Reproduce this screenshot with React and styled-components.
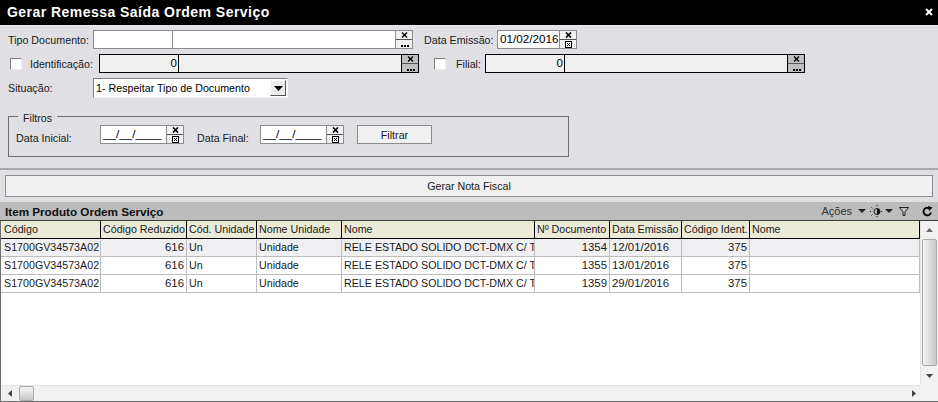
import React from "react"
import styled, { createGlobalStyle } from "styled-components"

const Global = createGlobalStyle`
  html, body { margin: 0; padding: 0; background: #dfdfe4; }
  body { font-family: "Liberation Sans", Arial, sans-serif; font-size: 10.7px; color: #000; }
  * { box-sizing: border-box; }
`

const Page = styled.div`
  width: 938px;
  height: 402px;
  display: flex;
  flex-direction: column;
  overflow: hidden;
`
const TitleBar = styled.div`
  height: 26px;
  flex: none;
  background: #000;
  border-bottom: 1px solid #e8e8e8;
  color: #fff;
  display: flex;
  align-items: center;
  justify-content: space-between;
  padding: 0 5px 1px 7px;
  font-weight: bold;
  font-size: 14px;
  letter-spacing: 0.46px;
`
const FormPanel = styled.div`
  height: 144px;
  flex: none;
  padding: 4px 0 0 8px;
  border-bottom: 2px solid #a9a9a9;
`
const Row = styled.div`
  display: flex;
  align-items: center;
  height: ${(p) => p.$h || 19}px;
  margin-bottom: ${(p) => p.$mb || 0}px;
`
const Label = styled.span`
  width: ${(p) => p.$w}px;
  margin-left: ${(p) => p.$ml || 0}px;
  flex: none;
  white-space: nowrap;
  color: #1a1a1a;
`
const Check = styled.span`
  width: 12px;
  height: 12px;
  flex: none;
  margin-left: ${(p) => p.$ml || 2}px;
  margin-right: ${(p) => p.$mr || 8}px;
  background: #fff;
  border: 1px solid #808080;
  border-right-color: #eee;
  border-bottom-color: #eee;
`
const Lookup = styled.div`
  display: flex;
  width: 320px;
  height: 19px;
  flex: none;
  border: 1px solid ${(p) => (p.$disabled ? "#000" : "#8c8c8c")};
  background: ${(p) => (p.$disabled ? "#efefef" : "#fff")};
`
const Code = styled.div`
  width: 79px;
  flex: none;
  text-align: right;
  line-height: 16px;
  padding-right: 1px;
  font-size: 11.5px;
  border-right: 1px solid ${(p) => (p.$disabled ? "#000" : "#8c8c8c")};
`
const Desc = styled.div`
  flex: 1;
`
const BtnStack = styled.div`
  width: 17px;
  flex: none;
  display: flex;
  flex-direction: column;
  border-left: 1px solid ${(p) => (p.$disabled ? "#000" : "#8c8c8c")};
`
const MiniBtn = styled.div`
  flex: 1;
  display: flex;
  align-items: center;
  justify-content: center;
  background: ${(p) => (p.$disabled ? "#c0c0c0" : "#f0f0f0")};
  & + & {
    border-top: 1px solid ${(p) => (p.$disabled ? "#555" : "#8c8c8c")};
  }
`
const DateBox = styled.div`
  display: flex;
  width: ${(p) => p.$w || 80}px;
  height: 19px;
  flex: none;
  border: 1px solid #8c8c8c;
  background: #fff;
`
const DateValue = styled.div`
  flex: 1;
  padding-left: 2px;
  line-height: 16px;
  font-size: 11.7px;
  white-space: nowrap;
  overflow: hidden;
`
const Select = styled.div`
  width: 195px;
  height: 20px;
  flex: none;
  background: #fff;
  border: 1px solid #808080;
  border-right-color: #f4f4f4;
  border-bottom-color: #f4f4f4;
  display: flex;
  align-items: center;
  justify-content: space-between;
  padding: 0 1px 0 2px;
`
const SelectArrow = styled.span`
  width: 16px;
  height: 16px;
  background: #ececec;
  border: 1px solid #555;
  border-left-color: #fff;
  border-top-color: #fff;
  display: flex;
  align-items: center;
  justify-content: center;
`
const Group = styled.div`
  width: 561px;
  height: 41px;
  margin-top: 18px;
  padding-left: 7px;
  border: 1px solid #6e6e6e;
  position: relative;
  display: flex;
  align-items: flex-start;
`
const Legend = styled.span`
  position: absolute;
  left: 9px;
  top: -6px;
  padding: 0 5px;
  background: #dfdfe4;
  color: #1a1a1a;
  line-height: 14px;
`
const GroupRow = styled.div`
  display: flex;
  align-items: center;
  margin-top: 8px;
`
const FilterLabel = styled(Label)`
  position: relative;
  top: 3px;
`
const Button = styled.div`
  width: 75px;
  height: 19px;
  margin-left: 13px;
  background: #f0f0f0;
  border: 1px solid #8c8c8c;
  display: flex;
  align-items: center;
  justify-content: center;
  color: #1a1a1a;
`
const GerarBar = styled.div`
  flex: none;
  height: 32px;
  padding: 5px 5px 5px;
`
const GerarBtn = styled(Button)`
  width: 100%;
  height: 22px;
  margin: 0;
`
const Grid = styled.div`
  flex: 1;
  display: flex;
  flex-direction: column;
  background: #fff;
  border-left: 1px solid #6e6e6e;
  border-bottom: 1px solid #6e6e6e;
  min-height: 0;
`
const GridTitle = styled.div`
  height: 19px;
  margin-left: -1px;
  flex: none;
  background: #bcbcbc;
  border-bottom: 1px solid #3c3c3c;
  display: flex;
  align-items: center;
  justify-content: space-between;
  padding: 0 5px 0 5px;
  font-weight: bold;
  font-size: 11.7px;
  color: #101010;
`
const Tools = styled.div`
  display: flex;
  align-items: center;
  font-weight: normal;
  font-size: 11px;
  color: #333;
`
const ToolIcon = styled.svg`
  display: block;
  margin-left: ${(p) => p.$ml || 0}px;
`
const GridBody = styled.div`
  flex: 1;
  display: grid;
  grid-template-columns: 1fr 18px;
  grid-template-rows: 1fr 16px;
  min-height: 0;
`
const TableArea = styled.div`
  min-width: 0;
  overflow: hidden;
`
const cols = "100px 86px 70px 85px 193px 75px 72px 68px 170px"
const HeadRow = styled.div`
  display: grid;
  grid-template-columns: ${cols};
  height: 18px;
  background: #ebead9;
  border-bottom: 1px solid #000;
`
const HeadCell = styled.div`
  padding-left: 2px;
  line-height: 16px;
  border-right: 1px solid #000;
  white-space: nowrap;
  overflow: hidden;
  color: #1a1a1a;
  &:first-child {
    padding-left: 3px;
  }
`
const DataRow = styled.div`
  display: grid;
  grid-template-columns: ${cols};
  height: 18px;
  background: ${(p) => (p.$selected ? "#f0f0f3" : "#fff")};
  border-bottom: 1px solid #bdbdbd;
`
const Cell = styled.div`
  padding: 0 2px;
  line-height: 17px;
  font-size: ${(p) => (p.$num ? "11.4px" : "inherit")};
  text-align: ${(p) => (p.$right ? "right" : "left")};
  border-right: 1px solid #bdbdbd;
  white-space: nowrap;
  overflow: hidden;
  color: #1a1a1a;
  &:first-child {
    padding-left: 3px;
  }
`
const VScroll = styled.div`
  background: #f1f1f1;
  border-left: 1px solid #e4e4e4;
  display: flex;
  flex-direction: column;
  align-items: center;
`
const HScroll = styled.div`
  background: #f1f1f1;
  border-top: 1px solid #e4e4e4;
  display: flex;
  align-items: center;
  padding: 0 4px 0 7px;
`
const Corner = styled.div`
  background: #f1f1f1;
`
const Thumb = styled.div`
  width: 15px;
  height: ${(p) => (p.$vertical ? "127px" : "15px")};
  margin-left: ${(p) => (p.$vertical ? 0 : 7)}px;
  border: 1px solid #aaa;
  border-radius: 2px;
  background: linear-gradient(to ${(p) => (p.$vertical ? "right" : "bottom")}, #f4f4f4, #c8c8c8);
`
const Arrow = styled.svg`
  display: block;
  flex: none;
  margin: ${(p) => p.$m || 0};
`

const XIcon = ({ bold }) => (
  <svg width="7" height="6" viewBox="0 0 7 6">
    <path d="M1 0.5 L6 5.5 M6 0.5 L1 5.5" stroke="#000" strokeWidth={bold ? 1.6 : 1.3} fill="none" />
  </svg>
)
const DotsIcon = () => (
  <svg width="9" height="7" viewBox="0 0 9 7">
    <path d="M1 4h2v2H1zM4 4h2v2H4zM7 4h2v2H7z" fill="#000" />
  </svg>
)
const CalIcon = () => (
  <svg width="7" height="7" viewBox="0 0 7 7">
    <rect x="0.5" y="0.5" width="6" height="6" fill="none" stroke="#000" />
    <path d="M2 2l3 3M5 2l-3 3" stroke="#000" fill="none" />
  </svg>
)

const LookupField = ({ disabled, value }) => (
  <Lookup $disabled={disabled}>
    <Code $disabled={disabled}>{value}</Code>
    <Desc />
    <BtnStack $disabled={disabled}>
      <MiniBtn $disabled={disabled}><XIcon /></MiniBtn>
      <MiniBtn $disabled={disabled}><DotsIcon /></MiniBtn>
    </BtnStack>
  </Lookup>
)

const DateField = ({ value, width }) => (
  <DateBox $w={width}>
    <DateValue>{value}</DateValue>
    <BtnStack>
      <MiniBtn><XIcon bold /></MiniBtn>
      <MiniBtn><CalIcon /></MiniBtn>
    </BtnStack>
  </DateBox>
)

const headers = ["Código", "Código Reduzido", "Cód. Unidade", "Nome Unidade", "Nome", "Nº Documento", "Data Emissão", "Código Ident.", "Nome"]
const rows = [
  ["1354", "12/01/2016"],
  ["1355", "13/01/2016"],
  ["1359", "29/01/2016"],
]

export default function App() {
  return (
    <Page>
      <Global />
      <TitleBar>
        <span>Gerar Remessa Saída Ordem Serviço</span>
        <svg width="8" height="8" viewBox="0 0 8 8">
          <path d="M1 1l6 6M7 1l-6 6" stroke="#fff" strokeWidth="2" />
        </svg>
      </TitleBar>
      <FormPanel>
        <Row $mb={5}>
          <Label $w={85}>Tipo Documento:</Label>
          <LookupField />
          <Label $w={73} $ml={11}>Data Emissão:</Label>
          <DateField value="01/02/2016" />
        </Row>
        <Row $mb={5}>
          <Check />
          <Label $w={69}>Identificação:</Label>
          <LookupField disabled value="0" />
          <Check $ml={15} $mr={10} />
          <Label $w={29}>Filial:</Label>
          <LookupField disabled value="0" />
        </Row>
        <Row $h={20}>
          <Label $w={85}>Situação:</Label>
          <Select>
            <span>1- Respeitar Tipo de Documento</span>
            <SelectArrow>
              <svg width="9" height="5" viewBox="0 0 9 5"><path d="M0 0h9L4.5 5z" fill="#000" /></svg>
            </SelectArrow>
          </Select>
        </Row>
        <Group>
          <Legend>Filtros</Legend>
          <GroupRow>
            <FilterLabel $w={84}>Data Inicial:</FilterLabel>
            <DateField value="__/__/____" width={84} />
            <FilterLabel $w={63} $ml={13}>Data Final:</FilterLabel>
            <DateField value="__/__/____" width={84} />
            <Button>Filtrar</Button>
          </GroupRow>
        </Group>
      </FormPanel>
      <GerarBar>
        <GerarBtn>Gerar Nota Fiscal</GerarBtn>
      </GerarBar>
      <Grid>
        <GridTitle>
          <span>Item Produto Ordem Serviço</span>
          <Tools>
            <span>Ações</span>
            <ToolIcon $ml={6} width="8" height="4" viewBox="0 0 8 4"><path d="M0 0h8L4 4z" fill="#222" /></ToolIcon>
            <ToolIcon $ml={4} width="13" height="13" viewBox="0 0 13 13">
              <circle cx="7" cy="6.5" r="3" fill="none" stroke="#111" />
              <path d="M7 3.5a3 3 0 0 1 0 6z" fill="#111" />
              <path d="M0 6.5h2M1.5 2.5l1.5 1.5M1.5 10.5l1.5-1.5M7 0v2M7 11v2M11 6.5h2" stroke="#111" strokeDasharray="1 1" />
            </ToolIcon>
            <ToolIcon $ml={2} width="8" height="4" viewBox="0 0 8 4"><path d="M0 0h8L4 4z" fill="#222" /></ToolIcon>
            <ToolIcon $ml={6} width="10" height="9" viewBox="0 0 10 9">
              <path d="M0.5 0.5h9L6 5v3.5H4V5z" fill="none" stroke="#222" />
            </ToolIcon>
            <ToolIcon $ml={13} width="11" height="11" viewBox="0 0 11 11">
              <path d="M9 6.5A3.8 3.8 0 1 1 7.5 2.5" fill="none" stroke="#000" strokeWidth="1.8" />
              <path d="M6 0l4.5 1.5L7 5z" fill="#000" />
            </ToolIcon>
          </Tools>
        </GridTitle>
        <GridBody>
          <TableArea>
            <HeadRow>
              {headers.map((h, i) => <HeadCell key={i}>{h}</HeadCell>)}
            </HeadRow>
            {rows.map((r, i) => (
              <DataRow key={r[0]} $selected={i === 0}>
                <Cell>S1700GV34573A02</Cell>
                <Cell $right $num>616</Cell>
                <Cell>Un</Cell>
                <Cell>Unidade</Cell>
                <Cell>RELE ESTADO SOLIDO DCT-DMX C/ TERMINAL</Cell>
                <Cell $right $num>{r[0]}</Cell>
                <Cell $num>{r[1]}</Cell>
                <Cell $right $num>375</Cell>
                <Cell />
              </DataRow>
            ))}
          </TableArea>
          <VScroll>
            <Arrow $m="7px 0 7px" width="7" height="4" viewBox="0 0 7 4"><path d="M3.5 0L7 4H0z" fill="#666" /></Arrow>
            <Thumb $vertical />
            <Arrow $m="auto 0 7px" width="7" height="4" viewBox="0 0 7 4"><path d="M0 0h7L3.5 4z" fill="#444" /></Arrow>
          </VScroll>
          <HScroll>
            <Arrow width="4" height="7" viewBox="0 0 4 7"><path d="M4 0v7L0 3.5z" fill="#444" /></Arrow>
            <Thumb />
            <Arrow $m="0 0 0 auto" width="4" height="7" viewBox="0 0 4 7"><path d="M0 0v7l4-3.5z" fill="#444" /></Arrow>
          </HScroll>
          <Corner />
        </GridBody>
      </Grid>
    </Page>
  )
}
